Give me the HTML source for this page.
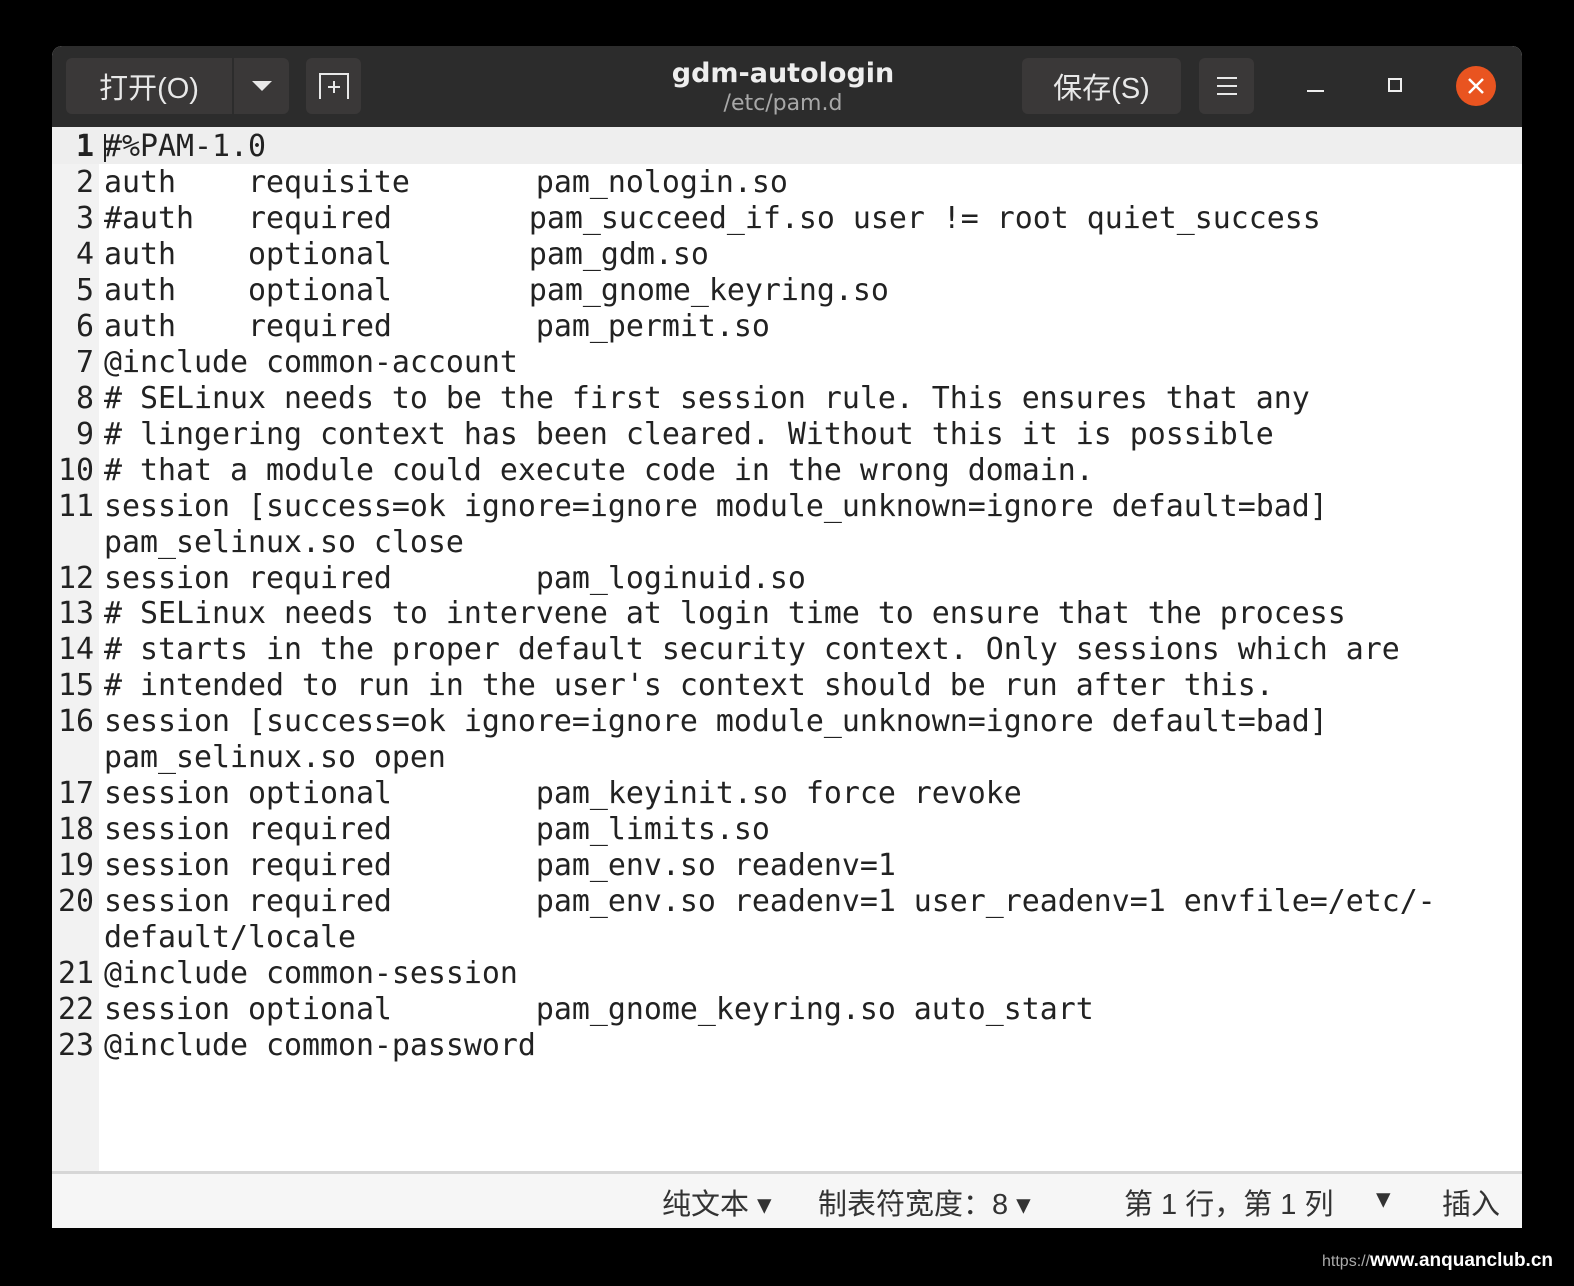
<!DOCTYPE html>
<html><head><meta charset="utf-8"><style>
*{margin:0;padding:0;box-sizing:border-box}
body{width:1574px;height:1286px;background:#000;position:relative;overflow:hidden;font-family:"Liberation Sans","Noto Sans CJK SC",sans-serif}
.win{position:absolute;left:52px;top:46px;width:1470px;height:1182px;background:#fff;border-radius:10px 10px 0 0;overflow:hidden}
.hdr{position:absolute;left:0;top:0;width:100%;height:81px;background:#2c2c2c}
.btn{position:absolute;top:12px;height:56px;background:#3a3838;border-radius:6px;color:#e8e8e8;font-size:29px;display:flex;align-items:center;justify-content:center}
.gut{position:absolute;left:0;top:81px;width:47px;height:1046px;background:#f2f2f2}
.cur{position:absolute;left:0;top:81px;width:100%;height:37px;background:#eeeeee}
.code{position:absolute;left:0;top:83px;font-family:"DejaVu Sans Mono",monospace;font-size:29.9px;line-height:35.96px;color:#222}
.r{position:absolute;left:0;height:36px;white-space:pre}
.n{position:absolute;width:42px;text-align:right;left:0}
.t{position:absolute;left:52px}
.s{position:relative;left:-7px}
.sb{position:absolute;left:0;top:1125px;width:100%;height:57px;background:#f6f6f6;border-top:3px solid #d6d6d6;font-size:29px;color:#333}
.sb span{position:absolute;top:7px}
</style></head><body>
<div class="win">
<div class="hdr">
 <div class="btn" style="left:14px;width:166px;border-radius:6px 0 0 6px">打开(O)</div>
 <div class="btn" style="left:182px;width:55px;border-radius:0 6px 6px 0"><svg width="22" height="12"><path d="M1 1h20L11 11z" fill="#e8e8e8"/></svg></div>
 <div class="btn" style="left:254px;width:55px"><svg width="32" height="28"><path d="M2 27V2h28v25M16 9v12M10 15h12" stroke="#e8e8e8" stroke-width="2" fill="none"/></svg></div>
 <div style="position:absolute;left:0;width:1462px;top:12px;text-align:center;color:#eee;font-weight:bold;font-size:27px;font-family:'DejaVu Sans',sans-serif">gdm-autologin</div>
 <div style="position:absolute;left:0;width:1462px;top:45px;text-align:center;color:#a8a8a8;font-size:22px;font-family:'DejaVu Sans',sans-serif">/etc/pam.d</div>
 <div class="btn" style="left:970px;width:159px">保存(S)</div>
 <div class="btn" style="left:1147px;width:55px"><svg width="22" height="20"><path d="M1 2h20M1 10h20M1 18h20" stroke="#e8e8e8" stroke-width="2"/></svg></div>
 <div style="position:absolute;left:1255px;top:44px;width:17px;height:2px;background:#eee"></div>
 <div style="position:absolute;left:1336px;top:32px;width:14px;height:14px;border:2px solid #eee"></div>
 <div style="position:absolute;left:1404px;top:20px;width:40px;height:40px;border-radius:50%;background:#e95420"><svg width="40" height="40"><path d="M13 13l14 14M27 13L13 27" stroke="#fff" stroke-width="2.5"/></svg></div>
</div>
<div class="gut"></div>
<div class="cur"></div>
<div style="position:absolute;left:52px;top:88px;width:2px;height:28px;background:#222"></div>
<div class="code">
<div class="r" style="top:0px"><span class="n" style="font-weight:bold">1</span><span class="t">#%PAM-1.0</span></div>
<div class="r" style="top:35.96px"><span class="n">2</span><span class="t">auth    requisite       pam_nologin.so</span></div>
<div class="r" style="top:71.92px"><span class="n">3</span><span class="t">#auth   required        <span class="s">pam_succeed_if.so user != root quiet_success</span></span></div>
<div class="r" style="top:107.88px"><span class="n">4</span><span class="t">auth    optional        <span class="s">pam_gdm.so</span></span></div>
<div class="r" style="top:143.84px"><span class="n">5</span><span class="t">auth    optional        <span class="s">pam_gnome_keyring.so</span></span></div>
<div class="r" style="top:179.8px"><span class="n">6</span><span class="t">auth    required        pam_permit.so</span></div>
<div class="r" style="top:215.76px"><span class="n">7</span><span class="t">@include common-account</span></div>
<div class="r" style="top:251.72px"><span class="n">8</span><span class="t"># SELinux needs to be the first session rule. This ensures that any</span></div>
<div class="r" style="top:287.68px"><span class="n">9</span><span class="t"># lingering context has been cleared. Without this it is possible</span></div>
<div class="r" style="top:323.64px"><span class="n">10</span><span class="t"># that a module could execute code in the wrong domain.</span></div>
<div class="r" style="top:359.6px"><span class="n">11</span><span class="t">session [success=ok ignore=ignore module_unknown=ignore default=bad]</span></div>
<div class="r" style="top:395.56px"><span class="t">pam_selinux.so close</span></div>
<div class="r" style="top:431.52px"><span class="n">12</span><span class="t">session required        pam_loginuid.so</span></div>
<div class="r" style="top:467.48px"><span class="n">13</span><span class="t"># SELinux needs to intervene at login time to ensure that the process</span></div>
<div class="r" style="top:503.44px"><span class="n">14</span><span class="t"># starts in the proper default security context. Only sessions which are</span></div>
<div class="r" style="top:539.4px"><span class="n">15</span><span class="t"># intended to run in the user's context should be run after this.</span></div>
<div class="r" style="top:575.36px"><span class="n">16</span><span class="t">session [success=ok ignore=ignore module_unknown=ignore default=bad]</span></div>
<div class="r" style="top:611.32px"><span class="t">pam_selinux.so open</span></div>
<div class="r" style="top:647.28px"><span class="n">17</span><span class="t">session optional        pam_keyinit.so force revoke</span></div>
<div class="r" style="top:683.24px"><span class="n">18</span><span class="t">session required        pam_limits.so</span></div>
<div class="r" style="top:719.2px"><span class="n">19</span><span class="t">session required        pam_env.so readenv=1</span></div>
<div class="r" style="top:755.16px"><span class="n">20</span><span class="t">session required        pam_env.so readenv=1 user_readenv=1 envfile=/etc/-</span></div>
<div class="r" style="top:791.12px"><span class="t">default/locale</span></div>
<div class="r" style="top:827.08px"><span class="n">21</span><span class="t">@include common-session</span></div>
<div class="r" style="top:863.04px"><span class="n">22</span><span class="t">session optional        pam_gnome_keyring.so auto_start</span></div>
<div class="r" style="top:899px"><span class="n">23</span><span class="t">@include common-password</span></div>
</div>
<div class="sb">
 <span style="left:610px">纯文本 ▾</span>
 <span style="left:766px">制表符宽度：8 ▾</span>
 <span style="left:1072px">第 1 行，第 1 列</span>
 <span style="left:1324px">▾</span>
 <span style="left:1390px">插入</span>
</div>
</div>
<div style="position:absolute;left:1322px;top:1250px;color:#fff;font-size:19px;font-weight:bold"><span style="color:#aaa;font-weight:normal;font-size:16px">https://</span>www.anquanclub.cn</div>
</body></html>
